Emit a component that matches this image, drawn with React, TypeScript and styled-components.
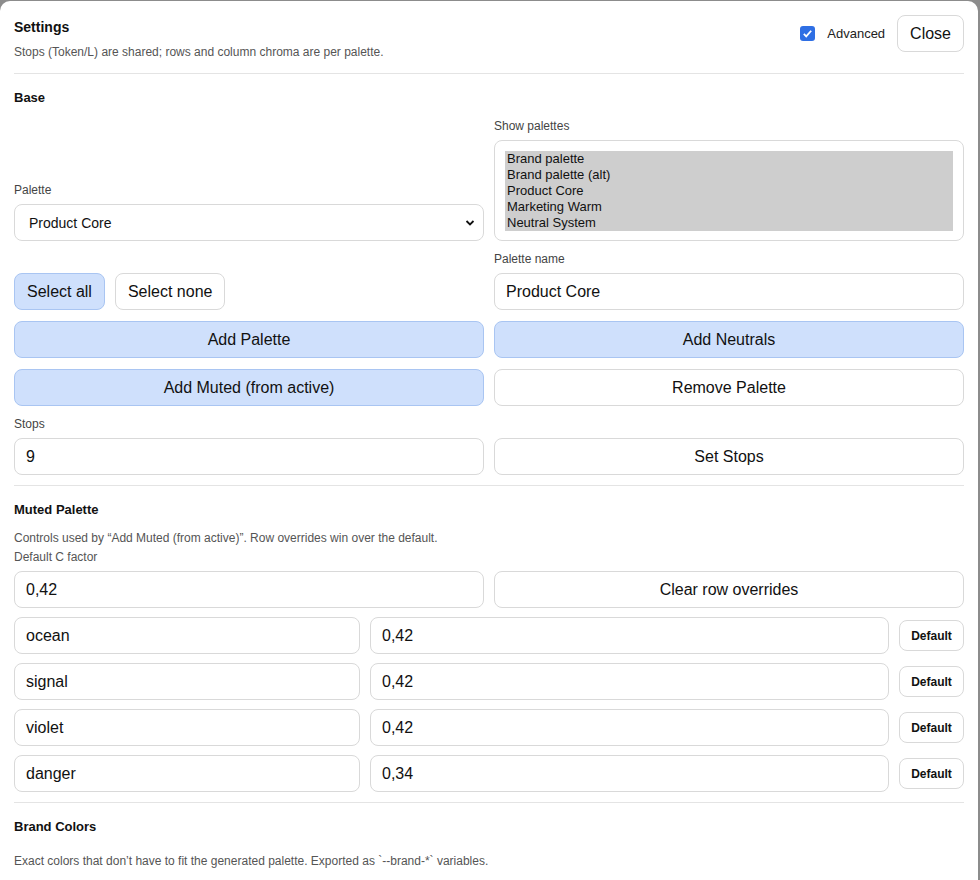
import React from 'react'
import styled, { createGlobalStyle } from 'styled-components'

const Global = createGlobalStyle`
  html, body { margin: 0; background: #8c8c8c; }
  body { font-family: "Liberation Sans", Arial, sans-serif; color: #111; }
`

const Panel = styled.div`
  width: 950px;
  margin-top: 1px;
  padding: 14px 14px 20px;
  background: #fff;
  border-radius: 10px 10px 0 0;
  height: 865px;
  overflow: hidden;
  box-sizing: content-box;
  display: flex;
  flex-direction: column;
`

const Header = styled.div`
  display: flex;
  justify-content: space-between;
  align-items: flex-start;
  padding-bottom: 14px;
  border-bottom: 1px solid #e4e4e4;
`

const Title = styled.div`
  font-size: 14px;
  font-weight: bold;
  margin-top: 4px;
`

const Sub = styled.div`
  font-size: 12px;
  color: #555;
  margin-top: ${(p: { $mt?: number }) => p.$mt ?? 0}px;
`

const HeadRight = styled.div`
  display: flex;
  align-items: center;
  gap: 12px;
`

const Check = styled.span`
  width: 15px;
  height: 15px;
  border-radius: 3px;
  background: #2f6fe4;
  display: inline-flex;
  align-items: center;
  justify-content: center;
`

const CheckLabel = styled.span`
  font-size: 13px;
  color: #222;
  margin-right: 0;
`

const Section = styled.div`
  padding: 16px 0 10px;
  border-bottom: ${(p: { $last?: boolean }) => (p.$last ? 'none' : '1px solid #e4e4e4')};
`

const H = styled.div`
  font-size: 13px;
  font-weight: bold;
  margin-bottom: ${(p: { $mb?: number }) => p.$mb ?? 10}px;
`

const Grid = styled.div`
  display: grid;
  grid-template-columns: 1fr 1fr;
  column-gap: 10px;
  row-gap: 11px;
  align-items: end;
`

const Field = styled.div`
  display: flex;
  flex-direction: column;
  gap: 7px;
`

const Label = styled.div`
  font-size: 12px;
  color: #444;
`

const Box = styled.div`
  height: 37px;
  box-sizing: border-box;
  border: 1px solid #d9d9d9;
  border-radius: 8px;
  display: flex;
  align-items: center;
  padding: 0 11px;
  font-size: 16px;
  background: #fff;
`

const SelectBox = styled(Box)`
  font-size: 14px;
  padding: 0 8px 0 14px;
  justify-content: space-between;
`

const ListBox = styled.div`
  height: 101px;
  box-sizing: border-box;
  border: 1px solid #d9d9d9;
  border-radius: 8px;
  padding: 10px 10px 0;
`

const Options = styled.div`
  background: #cecece;
  font-size: 13px;
  line-height: 16px;
  padding: 0 2px;
  height: 80px;
`

const Btn = styled.div<{ $blue?: boolean; $small?: boolean }>`
  height: ${(p) => (p.$small ? 31 : 37)}px;
  box-sizing: border-box;
  border: 1px solid ${(p) => (p.$blue ? '#a9c5f2' : '#d9d9d9')};
  background: ${(p) => (p.$blue ? '#cfe0fc' : '#fff')};
  border-radius: 8px;
  display: flex;
  align-items: center;
  justify-content: center;
  font-size: ${(p) => (p.$small ? 12 : 16)}px;
  font-weight: ${(p) => (p.$small ? 600 : 500)};
  padding: 0 ${(p) => (p.$small ? 10 : 12)}px;
  color: #111;
`

const BtnRow = styled.div`
  display: flex;
  gap: 10px;
`

const OverrideRow = styled.div`
  display: grid;
  grid-template-columns: 346px 1fr 65px;
  gap: 10px;
  align-items: center;
  margin-top: 9px;
`

const overrides = [
  ['ocean', '0,42'],
  ['signal', '0,42'],
  ['violet', '0,42'],
  ['danger', '0,34'],
]

export default function App() {
  return (
    <>
      <Global />
      <Panel>
        <Header>
          <div>
            <Title>Settings</Title>
            <Sub $mt={10}>Stops (Token/L) are shared; rows and column chroma are per palette.</Sub>
          </div>
          <HeadRight>
            <Check>
              <svg width="11" height="11" viewBox="0 0 12 12">
                <path d="M2 6.5l2.6 2.6L10 3" stroke="#fff" strokeWidth="2" fill="none" />
              </svg>
            </Check>
            <CheckLabel>Advanced</CheckLabel>
            <Btn>Close</Btn>
          </HeadRight>
        </Header>

        <Section>
          <H $mb={14}>Base</H>
          <Grid>
            <Field>
              <Label>Palette</Label>
              <SelectBox>
                Product Core
                <svg width="10" height="8" viewBox="0 0 10 8">
                  <path d="M1.5 2l3.5 3.5L8.5 2" stroke="#111" strokeWidth="1.8" fill="none" />
                </svg>
              </SelectBox>
            </Field>
            <Field>
              <Label>Show palettes</Label>
              <ListBox>
                <Options>
                  <div>Brand palette</div>
                  <div>Brand palette (alt)</div>
                  <div>Product Core</div>
                  <div>Marketing Warm</div>
                  <div>Neutral System</div>
                </Options>
              </ListBox>
            </Field>
            <BtnRow>
              <Btn $blue>Select all</Btn>
              <Btn>Select none</Btn>
            </BtnRow>
            <Field>
              <Label>Palette name</Label>
              <Box>Product Core</Box>
            </Field>
            <Btn $blue>Add Palette</Btn>
            <Btn $blue>Add Neutrals</Btn>
            <Btn $blue>Add Muted (from active)</Btn>
            <Btn>Remove Palette</Btn>
            <Field>
              <Label>Stops</Label>
              <Box>9</Box>
            </Field>
            <Btn>Set Stops</Btn>
          </Grid>
        </Section>

        <Section>
          <H $mb={14}>Muted Palette</H>
          <Sub>Controls used by “Add Muted (from active)”. Row overrides win over the default.</Sub>
          <Sub $mt={5}>Default C factor</Sub>
          <Grid style={{ marginTop: 7 }}>
            <Box>0,42</Box>
            <Btn>Clear row overrides</Btn>
          </Grid>
          {overrides.map(([name, val]) => (
            <OverrideRow key={name}>
              <Box>{name}</Box>
              <Box>{val}</Box>
              <Btn $small>Default</Btn>
            </OverrideRow>
          ))}
        </Section>

        <Section $last>
          <H $mb={20}>Brand Colors</H>
          <Sub>Exact colors that don’t have to fit the generated palette. Exported as `--brand-*` variables.</Sub>
        </Section>
      </Panel>
    </>
  )
}
